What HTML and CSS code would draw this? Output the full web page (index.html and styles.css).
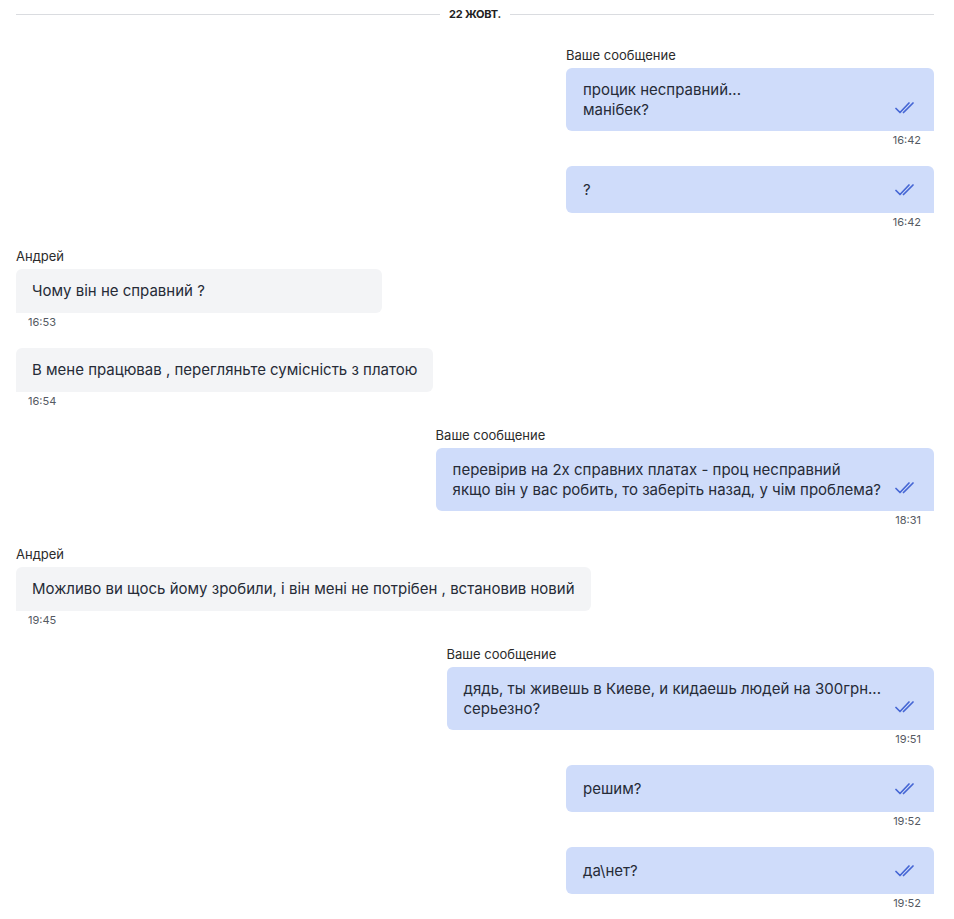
FILE: index.html
```html
<!DOCTYPE html>
<html lang="uk">
<head>
<meta charset="utf-8">
<link rel="stylesheet" href="styles.css">
</head>
<body>
<div class="chat">
  <div class="divider"><span class="divider-text">22 ЖОВТ.</span></div>

  <div class="msg out">
    <div class="author">Ваше сообщение</div>
    <div class="bubble"><div class="text">процик несправний...<br>манібек?</div><svg class="check" viewBox="0 0 22 12"><path d="M1 6.5 L5 10.5 L14 1 M8.5 10.5 L18 1"/></svg></div>
    <div class="time">16:42</div>
  </div>

  <div class="msg out">
    <div class="bubble"><div class="text">?</div><svg class="check" viewBox="0 0 22 12"><path d="M1 6.5 L5 10.5 L14 1 M8.5 10.5 L18 1"/></svg></div>
    <div class="time">16:42</div>
  </div>

  <div class="msg in">
    <div class="author">Андрей</div>
    <div class="bubble"><div class="text">Чому він не справний ?</div></div>
    <div class="time">16:53</div>
  </div>

  <div class="msg in">
    <div class="bubble"><div class="text">В мене працював , перегляньте сумісність з платою</div></div>
    <div class="time">16:54</div>
  </div>

  <div class="msg out">
    <div class="author">Ваше сообщение</div>
    <div class="bubble"><div class="text">перевірив на 2х справних платах - проц несправний<br>якщо він у вас робить, то заберіть назад, у чім проблема?</div><svg class="check" viewBox="0 0 22 12"><path d="M1 6.5 L5 10.5 L14 1 M8.5 10.5 L18 1"/></svg></div>
    <div class="time">18:31</div>
  </div>

  <div class="msg in">
    <div class="author">Андрей</div>
    <div class="bubble"><div class="text">Можливо ви щось йому зробили, і він мені не потрібен , встановив новий</div></div>
    <div class="time">19:45</div>
  </div>

  <div class="msg out">
    <div class="author">Ваше сообщение</div>
    <div class="bubble"><div class="text">дядь, ты живешь в Киеве, и кидаешь людей на 300грн...<br>серьезно?</div><svg class="check" viewBox="0 0 22 12"><path d="M1 6.5 L5 10.5 L14 1 M8.5 10.5 L18 1"/></svg></div>
    <div class="time">19:51</div>
  </div>

  <div class="msg out">
    <div class="bubble"><div class="text">решим?</div><svg class="check" viewBox="0 0 22 12"><path d="M1 6.5 L5 10.5 L14 1 M8.5 10.5 L18 1"/></svg></div>
    <div class="time">19:52</div>
  </div>

  <div class="msg out">
    <div class="bubble"><div class="text">да\нет?</div><svg class="check" viewBox="0 0 22 12"><path d="M1 6.5 L5 10.5 L14 1 M8.5 10.5 L18 1"/></svg></div>
    <div class="time">19:52</div>
  </div>
</div>
</body>
</html>
```

FILE: styles.css
```css
html, body {
  margin: 0;
  padding: 0;
  background: #ffffff;
}

body {
  font-family: Inter, "Noto Sans", sans-serif;
  color: #262b37;
}

.chat {
  padding: 0 20px 0 16px;
  display: flex;
  flex-direction: column;
}

.divider {
  height: 28px;
  display: flex;
  align-items: center;
  margin-bottom: 19px;
}

.divider::before,
.divider::after {
  content: "";
  flex: 1;
  height: 1px;
  background: #dadce0;
}

.divider-text {
  padding: 0 9px;
  font-size: 11px;
  font-weight: 700;
  color: #222;
  letter-spacing: -0.2px;
}

.msg {
  display: flex;
  flex-direction: column;
  margin-bottom: 19px;
}

.msg.out {
  align-self: flex-end;
  align-items: stretch;
}

.msg.in {
  align-self: flex-start;
  align-items: stretch;
}

.author {
  font-size: 13px;
  line-height: 16px;
  margin-bottom: 5px;
  color: #2b2b2b;
}

.bubble {
  display: flex;
  align-items: center;
  min-width: 368px;
  box-sizing: border-box;
  padding: 12px 16px 12px 17px;
  border-radius: 6px;
  font-size: 15px;
  line-height: 20px;
}

.msg.out .bubble {
  background: #cfdcfa;
  border-bottom-right-radius: 0;
  padding-bottom: 11px;
  min-height: 47px;
}

.msg.in .bubble {
  background: #f3f4f6;
  border-bottom-left-radius: 0;
  padding-left: 16px;
  min-width: 366px;
}

.text {
  flex: 1;
  white-space: nowrap;
}

.check {
  align-self: flex-end;
  flex: none;
  width: 22px;
  height: 12px;
  margin: 0 1px 6px 14px;
  fill: none;
  stroke: #4566d4;
  stroke-width: 1.7;
  stroke-linecap: round;
  stroke-linejoin: round;
}

.time {
  font-size: 11px;
  line-height: 14px;
  margin-top: 2px;
  color: #555a62;
}

.msg.out .time {
  text-align: right;
  padding-right: 13px;
}

.msg.in .time {
  padding-left: 12px;
}
```
